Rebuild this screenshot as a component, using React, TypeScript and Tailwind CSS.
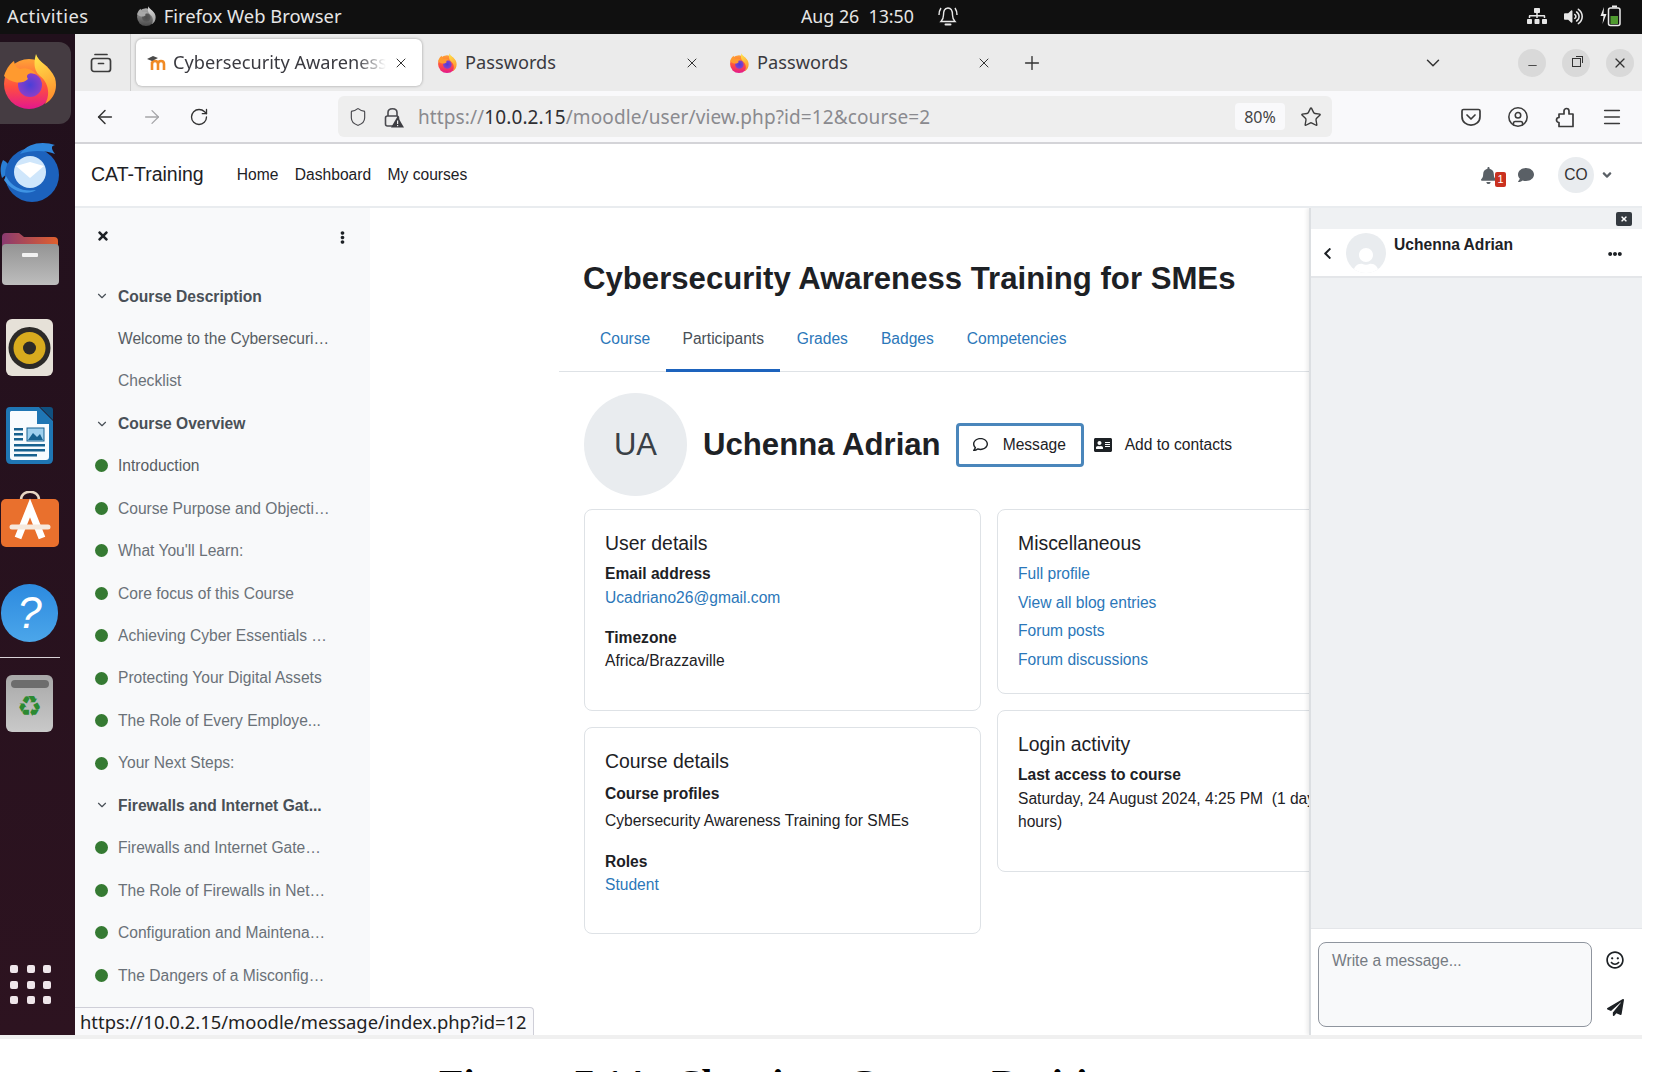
import { ArrowLeft, ArrowRight, ChevronDown, CircleUser, Menu, Minus, Plus, RotateCw, Shield, Star, X } from 'lucide-react';
import { FaAddressCard, FaAngleDown, FaBell, FaChevronLeft, FaComment, FaEllipsisH, FaEllipsisV, FaPaperPlane, FaRegComment, FaRegSmile, FaSitemap, FaTimes, FaUser, FaVolumeUp } from 'react-icons/fa';

const ubuntu = 'font-["Noto_Sans",sans-serif]';

function FirefoxIcon({ size = 56, id = 'ff', className = '' }: { size?: number; id?: string; className?: string }) {
    return (
        <svg width={size} height={size} viewBox="0 0 56 56" className={className}>
            <defs>
                <linearGradient id={`${id}-body`} x1="0.5" y1="0" x2="0.5" y2="1">
                    <stop offset="0" stopColor="#ffa436" />
                    <stop offset="0.55" stopColor="#ff4f3e" />
                    <stop offset="1" stopColor="#e3178d" />
                </linearGradient>
                <linearGradient id={`${id}-flame`} x1="0.4" y1="0" x2="0.6" y2="1">
                    <stop offset="0" stopColor="#ffe14a" />
                    <stop offset="1" stopColor="#ff8a2b" />
                </linearGradient>
                <radialGradient id={`${id}-core`}>
                    <stop offset="0" stopColor="#4a3fd8" />
                    <stop offset="1" stopColor="#8a3fc8" />
                </radialGradient>
            </defs>
            <circle cx="28" cy="31" r="25" fill={`url(#${id}-body)`} />
            <path d="M35 1C37 9 49 13 54 25C57 36 53 46 44 51C50 41 47 29 39 23C32 17 33 8 35 1Z" fill={`url(#${id}-flame)`} />
            <circle cx="29" cy="32" r="12" fill={`url(#${id}-core)`} />
            <path d="M3 23C6 14 10 10 13 8C14 13 16 15 19 16C25 14 31 16 35 21C28 19 24 22 27 26C21 32 10 30 3 23Z" fill="#ff9a2f" />
        </svg>
    );
}

function ThunderbirdIcon() {
    return (
        <svg width="62" height="60" viewBox="0 0 62 60">
            <path d="M3 18C7 20 10 24 12 28L2 36C0 30 0 24 3 18Z" fill="#2a7fd6" />
            <circle cx="32" cy="33" r="27" fill="#1c62bd" />
            <path d="M20 12C28 0 44 -1 55 3C50 4 52 8 55 12C46 8 30 8 20 12Z" fill="#2f86dc" />
            <circle cx="30" cy="30" r="16" fill="#cfe6fb" />
            <path d="M16 24L30 20L44 24L30 36Z" fill="#ffffff" />
            <path d="M4 38C12 50 28 54 36 48C24 50 12 46 6 34Z" fill="#3f94e4" />
        </svg>
    );
}

function FilesIcon() {
    return (
        <svg width="58" height="52" viewBox="0 0 58 52">
            <defs>
                <linearGradient id="folder-tab" x1="0" y1="0" x2="1" y2="0">
                    <stop offset="0" stopColor="#8a3a70" />
                    <stop offset="1" stopColor="#e0602e" />
                </linearGradient>
                <linearGradient id="folder-body" x1="0" y1="0" x2="0" y2="1">
                    <stop offset="0" stopColor="#949494" />
                    <stop offset="1" stopColor="#bdbdbd" />
                </linearGradient>
            </defs>
            <path d="M1 14V4Q1 0 5 0H18L23 4H53Q57 4 57 8V20H1Z" fill="url(#folder-tab)" />
            <rect x="1" y="11" width="57" height="41" rx="4" fill="url(#folder-body)" />
            <rect x="21" y="20" width="16" height="4" rx="1" fill="#f2f2f2" />
        </svg>
    );
}

function RhythmboxIcon() {
    return (
        <svg width="47" height="57" viewBox="0 0 47 57">
            <rect width="47" height="57" rx="6" fill="#e6e1d8" />
            <circle cx="23.5" cy="29" r="21" fill="#2c2a28" />
            <circle cx="23.5" cy="29" r="16" fill="#d8ab1e" />
            <circle cx="23.5" cy="29" r="6.5" fill="#2c2a28" />
        </svg>
    );
}

function WriterIcon() {
    return (
        <svg width="47" height="57" viewBox="0 0 47 57">
            <path d="M4 0H33L47 14V52Q47 57 42 57H5Q0 57 0 52V4Q0 0 4 0Z" fill="#1f76b4" />
            <path d="M5 4H31V17H43V50Q43 53 40 53H7Q4 53 4 50V5Z" fill="#f7fbfe" />
            <path d="M34 0L47 13V3Q47 0 44 0Z" fill="#10507f" />
            <rect x="8" y="21" width="9" height="2.5" fill="#17618f" />
            <rect x="8" y="26" width="9" height="2.5" fill="#17618f" />
            <rect x="8" y="31" width="9" height="2.5" fill="#17618f" />
            <rect x="21" y="21" width="17" height="13" fill="#9fd0ee" stroke="#17618f" />
            <path d="M22 33L27 26L31 30L34 27L37 33Z" fill="#17618f" />
            <rect x="8" y="37" width="31" height="2.5" fill="#17618f" />
            <rect x="8" y="42" width="31" height="2.5" fill="#17618f" />
            <rect x="8" y="47" width="23" height="2.5" fill="#17618f" />
        </svg>
    );
}

function SoftwareIcon() {
    return (
        <svg width="58" height="56" viewBox="0 0 58 56">
            <path d="M20 9C20 -2 38 -2 38 9" fill="none" stroke="#e8d6c4" strokeWidth="2.5" />
            <rect y="8" width="58" height="48" rx="5" fill="#e9702d" />
            <path d="M17 47L29 17L41 47" fill="none" stroke="#ffffff" strokeWidth="7" />
            <path d="M11 36H47" stroke="#f6e8dc" strokeWidth="5" strokeLinecap="round" />
        </svg>
    );
}

function TrashIcon() {
    return (
        <div className="relative flex h-[57px] w-[47px] flex-col items-center rounded-md bg-gradient-to-b from-[#a8a8a8] to-[#c9c9c9]">
            <div className="mt-[5px] h-[8px] w-[38px] rounded-sm bg-[#6d6d6d]" />
            <span className="mt-[2px] font-['DejaVu_Sans',sans-serif] text-[28px] leading-[34px] text-[#2c8a32]">♻</span>
        </div>
    );
}

function MoodleFavicon() {
    return (
        <svg width="20" height="16" viewBox="0 0 20 16">
            <path d="M5 7V15M5 9Q5 6 8 6T11 9V15M11 9Q11 6 14 6T17 9V15" fill="none" stroke="#f08a24" strokeWidth="2.6" />
            <path d="M0 4L6 1L11 3L5 6Z" fill="#4a4a4a" />
        </svg>
    );
}

function ViewIcon() {
    return (
        <svg width="22" height="22" viewBox="0 0 22 22" fill="none" stroke="#3b3b3b" strokeWidth="1.7">
            <path d="M5 2.5H17" strokeLinecap="round" />
            <rect x="1.5" y="6.5" width="19" height="13" rx="2.5" />
            <path d="M8.5 11.5H13.5" strokeLinecap="round" />
        </svg>
    );
}

function LockWarnIcon() {
    return (
        <svg width="20" height="22" viewBox="0 0 20 22" fill="none">
            <path d="M4 10V6.5C4 1.5 13 1.5 13 6.5V10" stroke="#4a4a4f" strokeWidth="1.6" />
            <rect x="1.5" y="10" width="13" height="10" rx="2" stroke="#4a4a4f" strokeWidth="1.6" />
            <path d="M13.5 10.5L20 21.5H7Z" fill="#3d3d42" />
            <rect x="13" y="14.5" width="1.2" height="3.5" fill="#eee" />
            <rect x="13" y="19" width="1.2" height="1.2" fill="#eee" />
        </svg>
    );
}

function PocketIcon() {
    return (
        <svg width="22" height="22" viewBox="0 0 22 22" fill="none" stroke="#3b3b3b" strokeWidth="1.7">
            <path d="M3.5 3.5H18.5Q20 3.5 20 5V10.5C20 22 2 22 2 10.5V5Q2 3.5 3.5 3.5Z" />
            <path d="M7 9L11 13L15 9" strokeLinecap="round" strokeLinejoin="round" />
        </svg>
    );
}

function ExtensionIcon() {
    return (
        <svg width="22" height="22" viewBox="0 0 22 22" fill="none" stroke="#3b3b3b" strokeWidth="1.7" strokeLinejoin="round">
            <path d="M5 8H10V5A2.5 2.5 0 0 1 15 5V8H19V20.5H5V16.5A2.5 2.5 0 0 1 5 11.5Z" />
        </svg>
    );
}

function GnomeBell() {
    return (
        <svg width="20" height="22" viewBox="0 0 20 22" fill="none" stroke="#e8e8e8" strokeWidth="1.4">
            <path d="M10 3C6 3 5.5 7 5.5 10C5.5 13 4.5 15 3 16.5H17C15.5 15 14.5 13 14.5 10C14.5 7 14 3 10 3Z" />
            <path d="M3 3Q1 6 1 10M17 3Q19 6 19 10" />
            <path d="M7.5 19.5H12.5" strokeWidth="2" strokeLinecap="round" />
        </svg>
    );
}

function BatteryIcon() {
    return (
        <svg width="22" height="22" viewBox="0 0 22 22">
            <path d="M4 2L0.5 11H3.5L2.5 19L6.5 9H3.5Z" fill="#ececec" />
            <rect x="8.5" y="3" width="11.5" height="17.5" rx="2" fill="none" stroke="#ececec" strokeWidth="1.5" />
            <rect x="12" y="0.5" width="5" height="2" fill="#ececec" />
            <rect x="10.5" y="11" width="7.5" height="8" fill="#4f9a2f" />
        </svg>
    );
}

function TopBar() {
    return (
        <div className={`flex h-[34px] shrink-0 items-center bg-[#101010] pb-[2px] text-[18.4px] text-[#e6e6e6] ${ubuntu}`}>
            <div className="flex w-[801px] shrink-0 items-center">
                <span className="ml-[7px] tracking-[0.5px]">Activities</span>
                <FirefoxIcon size={20} id="ff-top" className="ml-[47px] grayscale" />
                <span className="ml-[8px]">Firefox Web Browser</span>
            </div>
            <span className="whitespace-pre text-[17.8px]">Aug 26  13:50</span>
            <div className="ml-[24px]"><GnomeBell /></div>
            <div className="ml-auto flex items-center gap-[17px] pr-[20px]">
                <FaSitemap size={20} />
                <FaVolumeUp size={19} />
                <BatteryIcon />
            </div>
        </div>
    );
}

function Dock() {
    return (
        <div className="flex w-[75px] shrink-0 flex-col bg-gradient-to-b from-[#21101c] to-[#2d1320]">
            <div className="mt-[8px] flex h-[82px] w-[71px] items-center justify-center rounded-r-xl bg-[#453c42] pb-[4px] pr-[14px]">
                <FirefoxIcon id="ff-dock" />
            </div>
            <div className="mt-[18px] w-[62px]"><ThunderbirdIcon /></div>
            <div className="ml-[1px] mt-[31px]"><FilesIcon /></div>
            <div className="ml-[6px] mt-[34px]"><RhythmboxIcon /></div>
            <div className="ml-[6px] mt-[31px]"><WriterIcon /></div>
            <div className="ml-[1px] mt-[27px]"><SoftwareIcon /></div>
            <div className="ml-[1px] mt-[37px] flex h-[58px] w-[57px] items-center justify-center rounded-full bg-gradient-to-b from-[#2c8adf] to-[#4ba6ea] font-['Liberation_Sans',sans-serif] text-[44px] italic leading-none text-white">?</div>
            <div className="mt-[15px] h-px w-[60px] bg-[#d8d2d6]" />
            <div className="ml-[6px] mt-[17px]"><TrashIcon /></div>
            <div className="ml-[10px] mt-[233px] grid w-[42px] grid-cols-3 gap-x-[8px] gap-y-[7.5px]">
                {Array.from({ length: 9 }).map((_, i) => (
                    <div key={i} className="h-[8px] w-[8px] rounded-[2px] bg-[#efe6ea]" />
                ))}
            </div>
        </div>
    );
}

function TabClose({ className = '' }: { className?: string }) {
    return <X size={16} strokeWidth={1.5} className={`shrink-0 text-[#333] ${className}`} />;
}

function BrowserTab({ id }: { id: string }) {
    return (
        <div className="flex h-[47px] w-[280px] shrink-0 items-center pl-[10px] pr-[7px]">
            <FirefoxIcon size={20} id={id} />
            <span className="ml-[8px] text-[18.2px] text-[#3a3a40]">Passwords</span>
            <TabClose className="ml-auto" />
        </div>
    );
}

function TabStrip() {
    return (
        <div className={`flex h-[57px] shrink-0 items-center bg-[#ebebeb] ${ubuntu}`}>
            <div className="flex h-full w-[56px] items-center justify-center border-r border-[#cfcfcf] pr-[4px]"><ViewIcon /></div>
            <div className="ml-[5px] flex h-[47px] w-[286px] shrink-0 items-center rounded-md bg-white pl-[11px] pr-[13px] shadow-[0_0_3px_rgba(0,0,0,0.35)]">
                <MoodleFavicon />
                <span className="ml-[6px] w-[213px] overflow-hidden whitespace-nowrap text-[18.2px] text-[#3a3a40] [mask-image:linear-gradient(to_right,black_86%,transparent)]">Cybersecurity Awareness Training</span>
                <TabClose className="ml-auto" />
            </div>
            <div className="ml-[5px]"><BrowserTab id="ff-tab-a" /></div>
            <div className="ml-[12px]"><BrowserTab id="ff-tab-b" /></div>
            <Plus size={22} strokeWidth={1.5} className="ml-[22px] shrink-0 text-[#333]" />
            <ChevronDown size={22} strokeWidth={1.6} className="ml-[379px] shrink-0 text-[#333]" />
            <div className="ml-[74px] flex items-center gap-[16px]">
                <div className="flex h-[28px] w-[28px] items-center justify-center rounded-full bg-[#d9d9d9]"><Minus size={13} strokeWidth={1.6} className="mt-[6px] text-[#333]" /></div>
                <div className="flex h-[28px] w-[28px] items-center justify-center rounded-full bg-[#d9d9d9]">
                    <div className="relative h-[9px] w-[9px] border border-[#333]"><div className="absolute -right-[3px] -top-[3px] h-[7px] w-[7px] border-r border-t border-[#333]" /></div>
                </div>
                <div className="flex h-[28px] w-[28px] items-center justify-center rounded-full bg-[#d9d9d9]"><X size={16} strokeWidth={1.8} className="text-[#333]" /></div>
            </div>
        </div>
    );
}

function Toolbar() {
    return (
        <div className={`flex h-[53px] shrink-0 items-center border-b-2 border-[#d4d4d8] bg-[#f9f9fb] ${ubuntu}`}>
            <ArrowLeft size={22} strokeWidth={1.6} className="ml-[19px] shrink-0 text-[#333]" />
            <ArrowRight size={22} strokeWidth={1.4} className="ml-[25px] shrink-0 text-[#a5a5a8]" />
            <RotateCw size={20} strokeWidth={1.6} className="ml-[26px] shrink-0 text-[#333]" />
            <div className="ml-[129px] flex h-[41px] w-[994px] shrink-0 items-center rounded-md bg-[#eeeeee]">
                <Shield size={20} strokeWidth={1.4} className="ml-[10px] shrink-0 text-[#4a4a4f]" />
                <div className="ml-[16px] shrink-0"><LockWarnIcon /></div>
                <span className="ml-[14px] mt-[1px] whitespace-nowrap text-[19px] tracking-[0.1px] text-[#8a8a8f]">https://<span className="text-[#2f2f33]">10.0.2.15</span>/moodle/user/view.php?id=12&amp;course=2</span>
                <div className="ml-auto flex h-[27px] w-[50px] shrink-0 items-center justify-center rounded bg-[#f9f9fb] text-[16px] text-[#444]">80%</div>
                <Star size={22} strokeWidth={1.5} className="ml-[15px] mr-[10px] shrink-0 text-[#3b3b3b]" />
            </div>
            <div className="ml-[128px] flex items-center gap-[25px] text-[#3b3b3b]">
                <PocketIcon />
                <CircleUser size={22} strokeWidth={1.7} />
                <ExtensionIcon />
                <Menu size={22} strokeWidth={1.7} />
            </div>
        </div>
    );
}

function SiteNav() {
    return (
        <div className="flex h-[64px] shrink-0 items-center border-b-2 border-[#e9ecef] bg-white pl-[16px] font-['Liberation_Sans',sans-serif] text-[#1d2125]">
            <span className="text-[19.5px]">CAT-Training</span>
            <div className="ml-[33px] flex gap-[16.5px] text-[15.6px]">
                <span>Home</span>
                <span>Dashboard</span>
                <span>My courses</span>
            </div>
            <div className="relative ml-auto flex items-center pr-[28px] text-[#5a6066]">
                <FaBell size={17} />
                <span className="absolute left-[15px] top-[15px] flex h-[15px] w-[11px] items-center justify-center rounded-[2px] bg-[#ca3120] text-[11px] text-white">1</span>
                <FaComment size={16} className="ml-[21px]" />
                <div className="ml-[24px] flex h-[36px] w-[36px] items-center justify-center rounded-full bg-[#e9ecef] text-[15.6px] text-[#333]">CO</div>
                <FaAngleDown size={14} className="ml-[6px]" />
            </div>
        </div>
    );
}

const courseIndex = [
    { type: 'section', label: 'Course Description' },
    { type: 'plain', label: 'Welcome to the Cybersecuri…', dark: true },
    { type: 'plain', label: 'Checklist' },
    { type: 'section', label: 'Course Overview' },
    { type: 'done', label: 'Introduction', dark: true },
    { type: 'done', label: 'Course Purpose and Objecti…' },
    { type: 'done', label: "What You'll Learn:" },
    { type: 'done', label: 'Core focus of this Course' },
    { type: 'done', label: 'Achieving Cyber Essentials …' },
    { type: 'done', label: 'Protecting Your Digital Assets' },
    { type: 'done', label: 'The Role of Every Employe...' },
    { type: 'done', label: 'Your Next Steps:' },
    { type: 'section', label: 'Firewalls and Internet Gat...' },
    { type: 'done', label: 'Firewalls and Internet Gate…' },
    { type: 'done', label: 'The Role of Firewalls in Net…' },
    { type: 'done', label: 'Configuration and Maintena…' },
    { type: 'done', label: 'The Dangers of a Misconfig…' },
];

function CourseIndex() {
    return (
        <aside className="w-[295px] shrink-0 bg-[#f8f9fa] pl-[20px] font-['Liberation_Sans',sans-serif]">
            <div className="flex h-[67px] items-center justify-between pr-[21px]">
                <FaTimes size={14} className="ml-[1px] mt-[-11px] text-[#1d2125]" />
                <FaEllipsisV size={13} className="mt-[-8px] text-[#1d2125]" />
            </div>
            {courseIndex.map((item, i) => (
                <div key={i} className="flex h-[42.44px] items-center whitespace-nowrap text-[15.6px]">
                    <div className="flex w-[23px] shrink-0 items-center">
                        {item.type === 'section' && <ChevronDown size={14} strokeWidth={2} className="text-[#495057]" />}
                        {item.type === 'done' && <div className="h-[13px] w-[13px] rounded-full bg-[#357a32]" />}
                    </div>
                    <span className={item.type === 'section' ? 'font-bold text-[#495057]' : item.dark ? 'text-[#575d63]' : 'text-[#6a7178]'}>{item.label}</span>
                </div>
            ))}
        </aside>
    );
}

function Card({ title, className, children }: { title: string; className: string; children: React.ReactNode }) {
    return (
        <div className={`rounded-lg border border-[#dee2e6] px-[20px] pt-[21px] ${className}`}>
            <h3 className="text-[19.4px] leading-[24px] text-[#1d2125]">{title}</h3>
            {children}
        </div>
    );
}

function MainContent() {
    return (
        <main className="relative w-[1272px] overflow-hidden bg-white pl-[189px] font-['Liberation_Sans',sans-serif] text-[15.6px] leading-[24px] text-[#1d2125]">
            <h1 className="ml-[24px] mt-[51px] h-[40px] whitespace-nowrap text-[31.15px] font-bold leading-[40px]">Cybersecurity Awareness Training for SMEs</h1>
            <div className="mt-[8px] flex h-[65px] w-[1000px] items-center border-b border-[#dee2e6] pl-[25px] text-[#2b77b9]">
                <span className="mr-[16px] px-[16px]">Course</span>
                <span className="relative flex h-[65px] w-[114px] -ml-[16px] items-center justify-center border-b-[3px] border-[#1d63bd] pt-[3px] text-[#495057]">Participants</span>
                <span className="px-[16.5px]">Grades</span>
                <span className="px-[16.5px]">Badges</span>
                <span className="px-[16.5px]">Competencies</span>
            </div>
            <div className="ml-[25px] mt-[21px] flex h-[103px] items-center">
                <div className="flex h-[103px] w-[103px] items-center justify-center rounded-full bg-[#e9ecef] text-[31px] text-[#3a4046]">UA</div>
                <span className="ml-[16px] whitespace-nowrap text-[31.15px] font-bold">Uchenna Adrian</span>
                <div className="ml-[15px] flex h-[44px] w-[128px] items-center rounded-[4px] border-[3px] border-[#4a86bb] pl-[14px]">
                    <FaRegComment size={15} />
                    <span className="ml-[15px]">Message</span>
                </div>
                <FaAddressCard size={18} className="ml-[10px]" />
                <span className="ml-[13px]">Add to contacts</span>
            </div>
            <div className="ml-[25px] mt-[13px] flex items-start gap-[16px]">
                <div className="flex w-[397px] shrink-0 flex-col gap-[16px]">
                    <Card title="User details" className="h-[202px]">
                        <div className="mt-[7px] font-bold">Email address</div>
                        <div className="text-[#2b77b9]">Ucadriano26@gmail.com</div>
                        <div className="mt-[16px] font-bold">Timezone</div>
                        <div className="-mt-[1px]">Africa/Brazzaville</div>
                    </Card>
                    <Card title="Course details" className="h-[207px] pt-[20px]">
                        <div className="mt-[9px] font-bold">Course profiles</div>
                        <div className="mt-[3px]">Cybersecurity Awareness Training for SMEs</div>
                        <div className="mt-[17px] font-bold">Roles</div>
                        <div className="-mt-[1px] text-[#2b77b9]">Student</div>
                    </Card>
                </div>
                <div className="flex w-[398px] shrink-0 flex-col gap-[16px]">
                    <Card title="Miscellaneous" className="h-[185px]">
                        <div className="mt-[7px] flex flex-col gap-[4.67px] text-[#2b77b9]">
                            <span>Full profile</span>
                            <span>View all blog entries</span>
                            <span>Forum posts</span>
                            <span>Forum discussions</span>
                        </div>
                    </Card>
                    <Card title="Login activity" className="h-[162px]">
                        <div className="mt-[7px] font-bold">Last access to course</div>
                        <div className="whitespace-pre-wrap leading-[23px]">Saturday, 24 August 2024, 4:25 PM  (1 day 21 hours)</div>
                    </Card>
                </div>
            </div>
        </main>
    );
}

function MessageDrawer() {
    return (
        <div className="absolute bottom-0 right-0 top-0 flex w-[333px] flex-col border-l-2 border-[#dcdfe2] bg-white font-['Liberation_Sans',sans-serif] shadow-[-2px_0_4px_rgba(0,0,0,0.08)]">
            <div className="flex h-[21px] shrink-0 items-center justify-end bg-[#eff1f3] pr-[10px]">
                <div className="flex h-[14px] w-[16px] items-center justify-center rounded-[2px] bg-[#343a40]"><FaTimes size={8} className="text-white" /></div>
            </div>
            <div className="flex h-[49px] shrink-0 border-b-2 border-[#e4e6e9] pl-[10px]">
                <FaChevronLeft size={13} className="mt-[18px] shrink-0 text-[#1d2125]" />
                <div className="ml-[12px] mt-[4px] flex h-[40px] w-[40px] shrink-0 items-end justify-center overflow-hidden rounded-full bg-[#e9ecef]"><FaUser size={28} className="mb-[-3px] text-white" /></div>
                <span className="ml-[8px] mt-[5px] text-[15.6px] font-bold leading-[22px] text-[#1d2125]">Uchenna Adrian</span>
                <FaEllipsisH size={14} className="ml-auto mr-[20px] mt-[18px] shrink-0 text-[#1d2125]" />
            </div>
            <div className="flex-1 bg-[#eff1f3]" />
            <div className="flex h-[107px] shrink-0 border-t border-[#e4e6e9] pl-[7px] pt-[13px]">
                <div className="h-[85px] w-[274px] rounded-lg border border-[#8f959e] bg-[#f8f9fa] px-[13px] py-[6px] text-[15.6px] leading-[24px] text-[#757b82]">Write a message...</div>
                <div className="ml-[14px] flex flex-col items-center">
                    <FaRegSmile size={18} className="mt-[9px] text-[#1d2125]" />
                    <FaPaperPlane size={17} className="mt-[30px] text-[#1d2125]" />
                </div>
            </div>
        </div>
    );
}

export default function App() {
    return (
        <div className="h-[1072px] w-[1664px] overflow-hidden bg-white">
            <div className="h-[1035px] w-[1642px]">
                <TopBar />
                <div className="flex h-[1001px]">
                    <Dock />
                    <div className="relative flex w-[1567px] flex-col">
                        <TabStrip />
                        <Toolbar />
                        <SiteNav />
                        <div className="relative flex min-h-0 flex-1 overflow-hidden">
                            <CourseIndex />
                            <MainContent />
                            <MessageDrawer />
                            <div className={`absolute bottom-0 left-0 flex h-[28px] items-center rounded-tr-[4px] border-r border-t border-[#cfcfd8] bg-[#f9f9fb] pl-[5px] pr-[6px] text-[18.4px] text-[#222] ${ubuntu}`}>https://10.0.2.15/moodle/message/index.php?id=12</div>
                        </div>
                    </div>
                </div>
            </div>
            <div className="h-[4px] w-[1642px] bg-[#f0f0f0]" />
            <div className="pl-[439px] pt-[22px] whitespace-nowrap font-['Liberation_Serif',serif] text-[40px] font-bold leading-[46px] text-black [word-spacing:12px]">Figure 7.14: Showing Course Position</div>
        </div>
    );
}
